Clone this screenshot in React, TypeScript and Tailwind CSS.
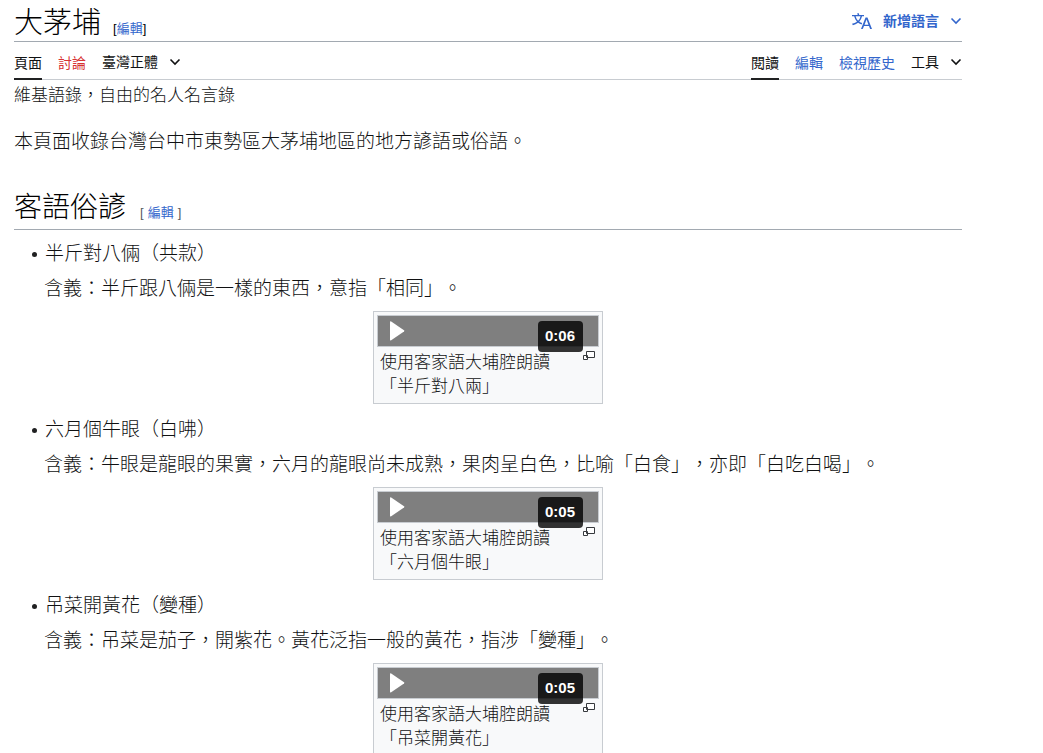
interface Saying {
  title: string;
  meaning: string;
  caption: string;
  duration: string;
}

const sayings: Saying[] = [
  {
    title: '半斤對八倆（共款）',
    meaning: '含義：半斤跟八倆是一樣的東西，意指「相同」。',
    caption: '「半斤對八兩」',
    duration: '0:06',
  },
  {
    title: '六月個牛眼（白咈）',
    meaning: '含義：牛眼是龍眼的果實，六月的龍眼尚未成熟，果肉呈白色，比喻「白食」，亦即「白吃白喝」。',
    caption: '「六月個牛眼」',
    duration: '0:05',
  },
  {
    title: '吊菜開黃花（變種）',
    meaning: '含義：吊菜是茄子，開紫花。黃花泛指一般的黃花，指涉「變種」。',
    caption: '「吊菜開黃花」',
    duration: '0:05',
  },
];

function Chevron() {
  return (
    <svg width="12" height="12" viewBox="0 0 12 12" fill="none" stroke="currentColor" strokeWidth="1.6" aria-hidden="true">
      <path d="M1.5 3.5 6 8l4.5-4.5" />
    </svg>
  );
}

function LanguageIcon() {
  return (
    <svg width="20" height="20" viewBox="0 0 20 20" fill="currentColor" aria-hidden="true">
      <path d="M20 18h-1.44a.6.6 0 0 1-.4-.12.8.8 0 0 1-.23-.31L17 15h-5l-1 2.54a.8.8 0 0 1-.22.3.6.6 0 0 1-.4.14H9l4.55-11.47h1.89zm-3.53-4.31L14.89 9.5a12 12 0 0 1-.39-1.24q-.09.37-.19.69l-.19.56-1.58 4.19zm-6.3-1.58a13.4 13.4 0 0 1-2.91-1.41 11.46 11.46 0 0 0 2.81-5.37H12V4H7.31a4 4 0 0 0-.2-.56C6.87 2.79 6.6 2 6.6 2l-1.47.5s.4.89.6 1.5H0v1.33h2.15A11.23 11.23 0 0 0 5 10.7a17.2 17.2 0 0 1-5 2.1q.56.82.87 1.38a23.3 23.3 0 0 0 5.22-2.51 15.6 15.6 0 0 0 3.56 1.77zM3.63 5.33h4.91a8.1 8.1 0 0 1-2.45 4.45 9.1 9.1 0 0 1-2.46-4.45" />
    </svg>
  );
}

function AudioThumb({ caption, duration }: { caption: string; duration: string }) {
  return (
    <figure className="mx-auto mt-[5px] w-[230px] border border-[#c8ccd1] bg-[#f8f9fa] p-[3px]">
      <div className="relative">
        <button type="button" aria-label="播放" className="flex h-8 w-full items-center border border-[#c8ccd1] bg-[#7f7f7f] pl-3">
          <svg width="15" height="20" viewBox="0 0 15 20" fill="#fff" aria-hidden="true">
            <path d="M1.2.5 14 9.2q.8.6 0 1.3L1.2 19.2Q0 19.8 0 18.5V1.2Q0 0 1.2.5z" />
          </svg>
        </button>
        <span className="absolute top-1.5 right-4 rounded bg-black/80 pr-2 pb-0.5 pl-[7px] font-['Liberation_Sans',sans-serif] text-[15px] leading-[29px] font-bold text-white">
          {duration}
        </span>
      </div>
      <figcaption className="flex items-start justify-between pt-1 pr-1 pb-px pl-[3px] text-[17px] leading-6">
        <span>
          使用客家語大埔腔朗讀
          <br />
          {caption}
        </span>
        <a href="#file" aria-label="放大">
          <svg width="12" height="10" viewBox="0 0 12 10" fill="#fff" stroke="#36393d" aria-hidden="true">
            <path d="M3.5.5h8v6h-8zM.5 4.5h4v4h-4z" />
          </svg>
        </a>
      </figcaption>
    </figure>
  );
}

export default function App() {
  return (
    <main
      lang="zh-Hant-TW"
      className="h-screen overflow-hidden bg-white pr-[81px] pl-3.5 font-['Liberation_Sans','Noto_Sans_CJK_TC',sans-serif] font-light text-[#101112] [text-spacing-trim:space-all]"
    >
      <header className="flex h-[42px] items-center justify-between border-b border-[#a2a9b1]">
        <div className="flex items-baseline gap-3 pt-1">
          <h1 className="text-[29px] leading-9 text-black">大茅埔</h1>
          <span className="text-[13px] font-normal text-black">
            [<a href="#edit" className="text-[#3366cc]">編輯</a>]
          </span>
        </div>
        <button type="button" className="flex items-center gap-[11px] pt-px text-sm font-bold text-[#3366cc]">
          <LanguageIcon />
          新增語言
          <Chevron />
        </button>
      </header>

      <nav className="flex h-[38px] justify-between border-b border-[#c8ccd1] text-sm leading-[42px] font-normal">
        <div className="flex gap-4">
          <a href="#page" className="h-[38px] border-b-2 border-[#202122]">頁面</a>
          <a href="#talk" className="text-[#d73333]">討論</a>
          <button type="button" className="flex h-10 items-center gap-[11px]">
            臺灣正體
            <Chevron />
          </button>
        </div>
        <div className="flex gap-4">
          <a href="#read" className="h-[38px] border-b-2 border-[#202122]">閱讀</a>
          <a href="#edit" className="text-[#3366cc]">編輯</a>
          <a href="#history" className="text-[#3366cc]">檢視歷史</a>
          <button type="button" className="flex h-10 items-center gap-[11px]">
            工具
            <Chevron />
          </button>
        </div>
      </nav>

      <p className="text-[17px] leading-8">維基語錄，自由的名人名言錄</p>
      <p className="mt-3 text-[19px] leading-9">本頁面收錄台灣台中市東勢區大茅埔地區的地方諺語或俗語。</p>

      <div className="mt-[26px] flex items-baseline gap-3.5 border-b border-[#a2a9b1]">
        <h2 className="text-[28px] leading-[43px] text-black">客語俗諺</h2>
        <span className="flex gap-1 text-[13px] font-normal text-[#54595d]">
          [<a href="#edit-section" className="text-[#3366cc]">編輯</a>]
        </span>
      </div>

      <ul className="mt-1.5 text-[19px] leading-[35px]">
        {sayings.map(saying => (
          <li key={saying.title} className="mb-2">
            <div className="flex items-center">
              <span className="mt-0.5 mr-2 ml-[18px] size-[5px] rounded-full bg-[#202122]" />
              {saying.title}
            </div>
            <p className="pl-[30px]">{saying.meaning}</p>
            <AudioThumb caption={saying.caption} duration={saying.duration} />
          </li>
        ))}
      </ul>
    </main>
  );
}
